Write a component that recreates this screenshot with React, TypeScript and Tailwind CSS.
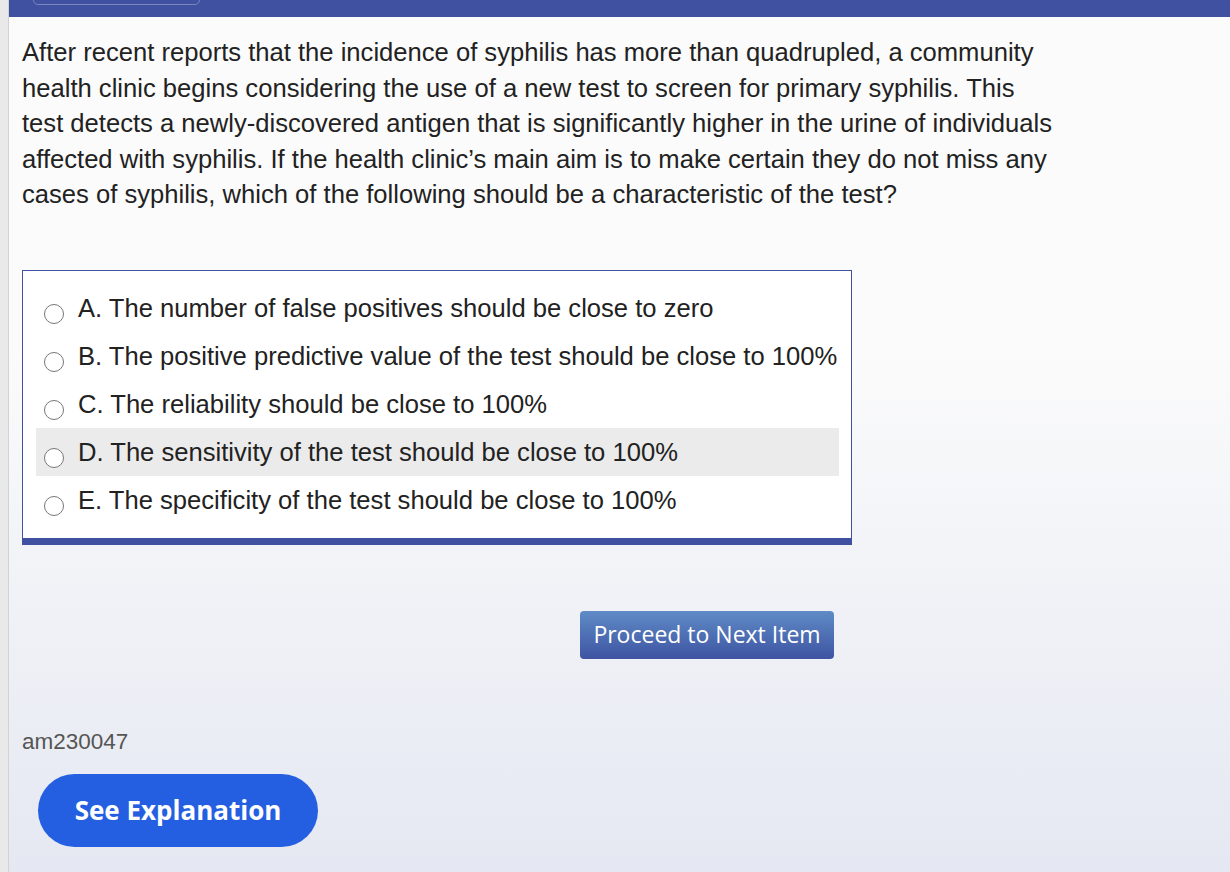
import React from "react";

const options = [
  "A. The number of false positives should be close to zero",
  "B. The positive predictive value of the test should be close to 100%",
  "C. The reliability should be close to 100%",
  "D. The sensitivity of the test should be close to 100%",
  "E. The specificity of the test should be close to 100%",
];

export default function App() {
  return (
    <div className="flex h-[872px] w-[1230px] overflow-hidden bg-[#e9e9e9] font-['Liberation_Sans',Arial,sans-serif]">
      <div className="w-[9px] border-r border-[#d2d2d2]" />
      <div className="flex flex-1 flex-col bg-gradient-to-b from-[#fbfbfb] from-40% to-[#e5e8f2]">
        <div className="h-[17px] bg-[#3f51a0] pl-[24px]">
          <div className="-mt-[12px] h-[17px] w-[167px] rounded-[5px] border border-[#7a86c0]" />
        </div>

        <div className="pl-[13px]">
          <p className="mt-[18px] w-[1036px] text-[25.6px] leading-[35.5px] text-[#222]">
            After recent reports that the incidence of syphilis has more than quadrupled, a community health clinic
            begins considering the use of a new test to screen for primary syphilis. This test detects a
            newly-discovered antigen that is significantly higher in the urine of individuals affected with syphilis.
            If the health clinic’s main aim is to make certain they do not miss any cases of syphilis, which of the
            following should be a characteristic of the test?
          </p>

          <div className="mt-[57px] w-[830px] border border-b-[7px] border-[#3f51a0] bg-white pb-[14px] pl-[13px] pr-[12px] pt-[13px]">
            {options.map((o, i) => (
              <div
                key={o}
                className={`flex h-[48px] items-center gap-[14px] pl-[8px] ${i === 3 ? "bg-[#ebebeb]" : ""}`}
              >
                <span className="mt-[13px] h-[20px] w-[20px] shrink-0 rounded-full border-[1.5px] border-[#777] bg-white" />
                <span className="pt-[2px] text-[25.6px] leading-none text-[#222]">{o}</span>
              </div>
            ))}
          </div>

          <div className="mt-[66px] flex w-[812px] justify-end">
            <button className="h-[48px] w-[254px] rounded-[4px] bg-gradient-to-b from-[#5f8bc6] to-[#3f54a2] font-['Open_Sans',sans-serif] text-[23px] text-white">
              Proceed to Next Item
            </button>
          </div>

          <div className="mt-[72px] text-[22.5px] leading-none text-[#555]">am230047</div>

          <button className="ml-[16px] mt-[21px] h-[73px] w-[280px] rounded-full bg-[#255fe1] font-['Open_Sans',sans-serif] text-[26px] font-bold text-white">
            See Explanation
          </button>
        </div>
      </div>
    </div>
  );
}
